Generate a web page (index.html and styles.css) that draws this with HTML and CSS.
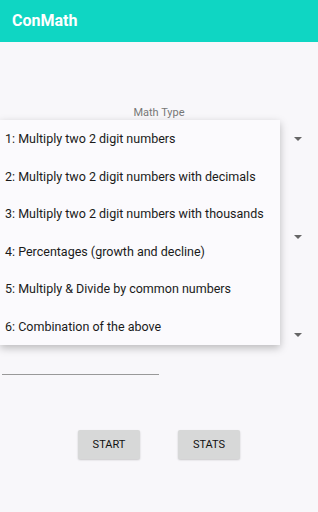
FILE: index.html
```html
<!DOCTYPE html>
<html lang="en">
<head>
    <meta charset="UTF-8">
    <meta name="viewport" content="width=device-width, initial-scale=1.0">
    <title>ConMath</title>
    <link rel="stylesheet" href="styles.css">
</head>
<body>
    <div class="toolbar">ConMath</div>

    <div class="content">
        <div class="label">Math Type</div>
        <div class="spinner first"><span class="arrow"></span></div>
        <div class="spinner"><span class="arrow"></span></div>
        <div class="spinner"><span class="arrow"></span></div>
        <div class="field"></div>
        <div class="buttons">
            <button class="btn">START</button>
            <button class="btn">STATS</button>
        </div>

        <!-- menu abierto del spinner -->
        <div class="popup">
            <div class="item">1: Multiply two 2 digit numbers</div>
            <div class="item">2: Multiply two 2 digit numbers with decimals</div>
            <div class="item">3: Multiply two 2 digit numbers with thousands</div>
            <div class="item">4: Percentages (growth and decline)</div>
            <div class="item">5: Multiply &amp; Divide by common numbers</div>
            <div class="item">6: Combination of the above</div>
        </div>
    </div>
</body>
</html>
```

FILE: styles.css
```css
body, html {
    margin: 0;
    padding: 0;
    height: 100%;
}
body {
    background-color: #f8f7fa;
    font-family: Roboto, "Liberation Sans", sans-serif;
    color: #222;
}
.toolbar {
    height: 42px;
    background-color: #0fd6c3;
    color: white;
    font-weight: bold;
    font-size: 16px;
    line-height: 42px;
    padding-left: 12px;
}
.content {
    position: relative;
    padding-top: 64px;
}
.label {
    text-align: center;
    font-size: 11px;
    color: #777;
    line-height: 14px;
}
.spinner {
    height: 98px;
    position: relative;
}
.spinner.first {
    margin-top: -9px;
}
.arrow {
    position: absolute;
    right: 16px;
    top: 26px;
    width: 0;
    height: 0;
    border-left: 4px solid transparent;
    border-right: 4px solid transparent;
    border-top: 4px solid #666;
}
.field {
    margin: -31px 0 0 2px;
    width: 157px;
    border-bottom: 1px solid #999;
}
.buttons {
    display: flex;
    gap: 38px;
    margin-top: 55px;
    padding-left: 78px;
}
.btn {
    width: 62px;
    height: 29px;
    border: none;
    border-radius: 2px;
    background-color: #d7d8d8;
    color: #111;
    font-family: Roboto, "Liberation Sans", sans-serif;
    font-size: 11px;
    padding: 0;
    box-shadow: 0 1px 2px rgba(0, 0, 0, 0.2);
}
.popup {
    position: absolute;
    top: 78px;
    left: 0;
    width: 280px;
    background-color: #fbfafd;
    box-shadow: 0 3px 8px rgba(0, 0, 0, 0.25);
}
.item {
    height: 37.5px;
    line-height: 37.5px;
    padding-left: 5px;
    font-size: 12.5px;
    color: #1a1a1a;
    white-space: nowrap;
}
```
